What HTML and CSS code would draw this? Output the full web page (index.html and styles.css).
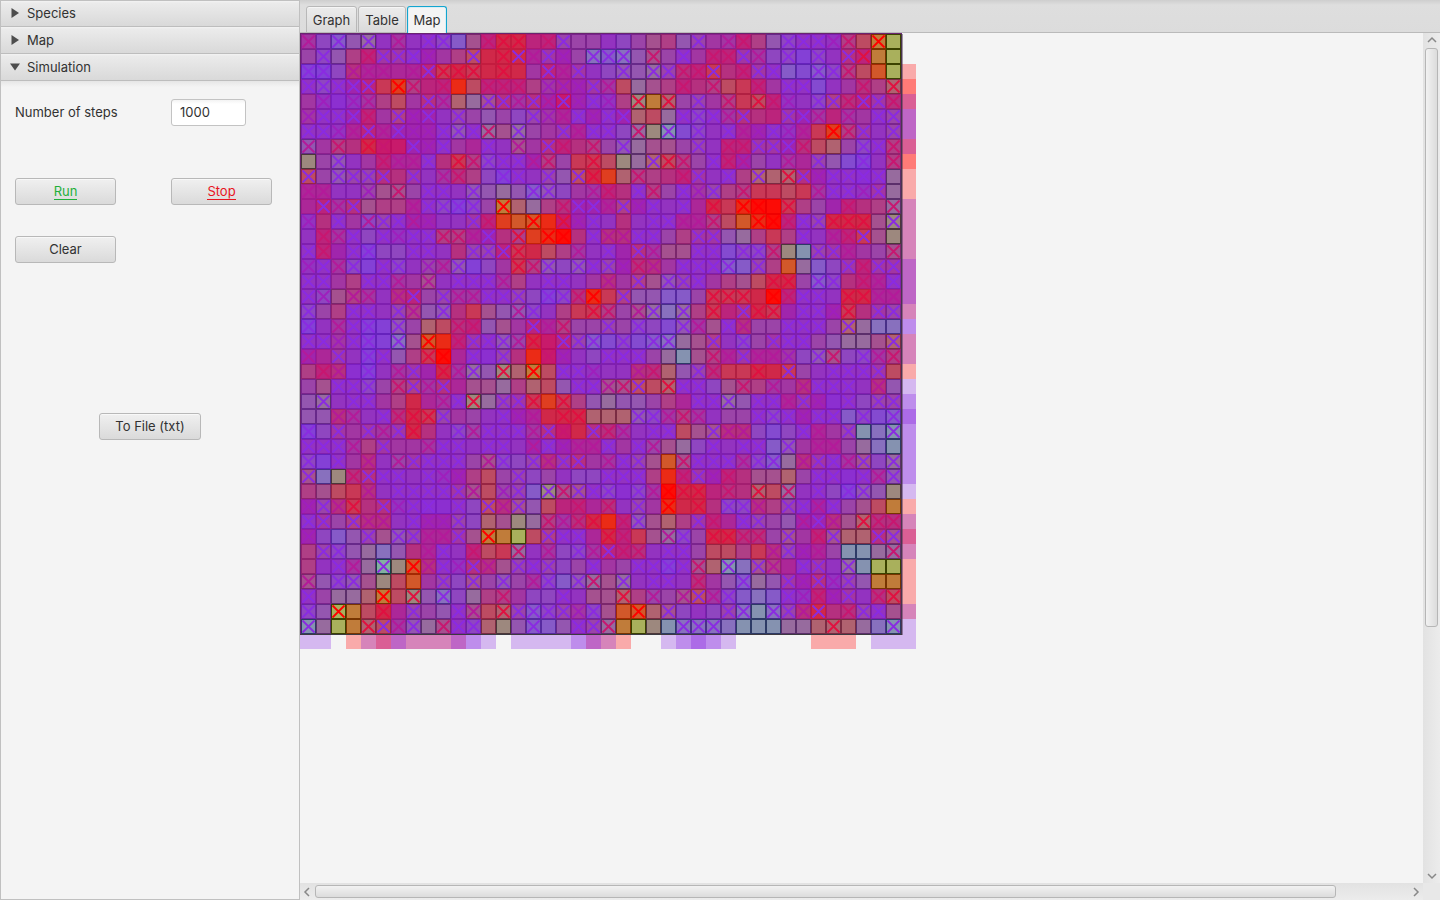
FILE: index.html
```html
<!DOCTYPE html>
<html lang="en">
<head>
<meta charset="utf-8">
<title>Simulation</title>
<link rel="stylesheet" href="styles.css">
</head>
<body>
<div class="app">
  <aside class="sidebar">
    <div class="pane-title"><svg class="arrow" viewBox="0 0 10 12"><path d="M1.500 1L9 6L1.500 11Z"/></svg><span>Species</span></div>
    <div class="pane-title"><svg class="arrow" viewBox="0 0 10 12"><path d="M1.500 1L9 6L1.500 11Z"/></svg><span>Map</span></div>
    <div class="pane-title"><svg class="arrow" viewBox="0 0 10 12"><path d="M0 2.500H10L5 9.500Z"/></svg><span>Simulation</span></div>
    <div class="pane">
      <div class="form">
        <label for="steps">Number of steps</label>
        <input id="steps" class="field" value="1000">
        <button class="btn run"><span>Run</span></button>
        <button class="btn stop"><span>Stop</span></button>
        <button class="btn">Clear</button>
      </div>
      <button class="btn file">To File (txt)</button>
    </div>
  </aside>
  <main class="main">
    <nav class="tabs">
      <div class="tab graph">Graph</div>
      <div class="tab table">Table</div>
      <div class="tab active">Map</div>
    </nav>
    <div class="view">
      <div class="viewport"><svg id="map" class="map" width="617" height="617"></svg></div>
      <div class="vbar">
        <svg class="chev" viewBox="0 0 10 10"><path d="M1 7L5 3L9 7"/></svg>
        <div class="vthumb"></div>
        <svg class="chev end" viewBox="0 0 10 10"><path d="M1 3L5 7L9 3"/></svg>
      </div>
      <div class="hbar">
        <svg class="chev" viewBox="0 0 10 10"><path d="M7 1L3 5L7 9"/></svg>
        <div class="hthumb"></div>
        <svg class="chev end" viewBox="0 0 10 10"><path d="M3 1L7 5L3 9"/></svg>
      </div>
      <div class="corner"></div>
    </div>
  </main>
</div>
<script src="map.js"></script>
</body>
</html>
```
FILE: styles.css
```css
* { box-sizing: border-box; }
body {
  margin: 0;
  font: 13px/16px Inter, "Open Sans", sans-serif;
  color: #323232;
  background: #f4f4f4;
  overflow: hidden;
}
.app { display: flex; width: 1440px; height: 900px; }
.sidebar {
  width: 300px;
  height: 900px;
  display: flex;
  flex-direction: column;
  border: 1px solid #c0c0c0;
}
.pane-title {
  height: 27px;
  flex: none;
  display: flex;
  align-items: center;
  gap: 7px;
  padding: 0 0 1px 9px;
  border-bottom: 1px solid #bdbdbd;
  background: linear-gradient(#f3f3f3 0, #ebebeb 2px, #d9d9d9 100%);
}
.pane-title:first-child { height: 26px; }
.arrow { width: 10px; height: 12px; fill: #4d4d4d; }
.pane {
  flex: 1;
  display: flex;
  flex-direction: column;
  padding: 18px 14px;
  background: linear-gradient(#e6e6e6 0, #f4f4f4 6px);
}
.form {
  display: grid;
  grid-template-columns: 101px 101px;
  grid-template-rows: 27px 48px 27px;
  gap: 31px 55px;
  align-items: start;
}
.form label { padding-top: 5px; white-space: nowrap; }
.field {
  width: 75px;
  height: 27px;
  padding: 0 8px 1px;
  font: inherit;
  color: #323232;
  border: 1px solid #c3c3c3;
  border-radius: 3px;
  background: linear-gradient(#f3f3f3, #fff 4px);
}
.btn {
  height: 27px;
  padding: 0 0 2px;
  font: inherit;
  color: #323232;
  border: 1px solid #b8b8b8;
  border-radius: 3px;
  background: linear-gradient(#f0f0f0, #dadada);
  box-shadow: inset 0 1px #f8f8f8;
}
.run, .stop { margin-top: 21px; }
.run { color: #1fb03a; }
.stop { color: #e8151f; }
.run span, .stop span { border-bottom: 1px solid; }
.file { width: 102px; margin: 150px 0 0 84px; }
.main { flex: 1; display: flex; flex-direction: column; }
.tabs {
  height: 33px;
  display: flex;
  align-items: flex-end;
  gap: 1px;
  padding-left: 6px;
  background: linear-gradient(#cecece, #dedede 5px, #dcdcdc);
  box-shadow: inset 0 -1px #bababa;
}
.tab {
  width: 40px;
  height: 27px;
  padding-top: 5px;
  text-align: center;
  border: 1px solid #b8b8b8;
  border-radius: 3px 3px 0 0;
  background: linear-gradient(#ececec, #dadada);
  box-shadow: inset 0 1px #f6f6f6;
}
.graph { width: 51px; }
.table { width: 48px; }
.tab.active {
  border-color: #13a5cf;
  border-bottom: 0;
  background: #f4f4f4;
  box-shadow: inset 1px 1px #d9eef5, inset -1px 0 #d9eef5;
}
.view {
  flex: 1;
  display: grid;
  grid-template-columns: 1123px 17px;
  grid-template-rows: 850px 17px;
}
.map { display: block; }
.vbar, .hbar { display: flex; align-items: center; background: linear-gradient(90deg, #e2e2e2, #ececec); }
.vbar { flex-direction: column; padding: 2px 0; }
.hbar { background: linear-gradient(#e2e2e2, #ececec); padding: 0 2px; }
.corner { background: #e8e8e8; }
.chev { width: 10px; height: 10px; fill: none; stroke: #888; stroke-width: 1.5; }
.end { margin: auto 0 0; }
.hbar .end { margin: 0 0 0 auto; }
.vthumb, .hthumb { border: 1px solid #b6b6b6; border-radius: 3px; }
.vthumb { width: 13px; height: 579px; margin-top: 3px; background: linear-gradient(90deg, #f2f2f2, #dcdcdc); }
.hthumb { height: 13px; width: 1021px; margin-left: 3px; background: linear-gradient(#f2f2f2, #dcdcdc); }
```
FILE: map.js
```js
// Fill colours of the map cells.
const fills = {
  a: '#8c2fd0', b: '#9333c0', c: '#a025ac', d: '#ac2798', e: '#bb247c', f: '#c81a6b',
  g: '#d02849', h: '#c93856', i: '#eb2b16', j: '#fc0c06', k: '#bd4b62', l: '#b06270',
  m: '#a5518f', n: '#9b44a8', o: '#8f46c0', p: '#8440d6', q: '#865ac8', r: '#9456b0',
  s: '#976b9e', t: '#9d887e', u: '#c07c3a', v: '#a9b05c', w: '#d2582a', x: '#8592b0',
  y: '#8870be', z: '#af3f86', A: '#844ad0', B: '#df3e20', C: '#a236a2', D: '#b5307f',
  G: '#83b0a0'
};
// Stroke colours of the crosses, 0 is a cell without one.
const marks = [null, '#8a2be2', '#9f1fbd', '#b41a9a', '#c81670', '#e01040', '#ff0000'];

const rows = `
C3o0q1r0s1b0C3b0b1o1q0m0e4g5 g5e0e4n1n0n0b0o0n0m0z0r0n1 C0C3e4z0r0o1b1b1b2z4k0u6v0
n0o1r0z0e4C1C1b1c2C0z0k1g0g5 g1d3C1c2n0y1q1y1r0m4n0b1C0 e4e4C1C3o0o1p0o1b0D1e5u0v0
p1p1o0D3d3d3d0d3e1h5g5h5g0g5 g0C0e1d3C1b0o0r1r0s1n1D4e4 h1D0e4C1b1q0A0q1o1z4k0w0v0
b1o1b1c1e1h0B6z4e0e4i0k0e4e4 e4z0C2d2c2C1C3k0s0m0z0e4D0 z4k0h0e4C0b1b1A0b0C0D4z0l5
C0b2a0b2C3z0k0C0D1C3l0s0m1D1 C3D1c3f1c2b1b2z0t5u0l5n0n1 C0z4h0k5e4b2b0o1z1D4e1C1D4
C2b1b1c1e4C0z1c2c1b0n1n0r0n0 o0n1C2d3b1c2b1c1l0k0s0b1o1 b1C3D1D0e0C1c1C3e0C3C0b1n1
b1b1b2d3e1d3c1c2c2b1r1b1s4m0 s1n0C0C1d3b1b1o0s4t0x1A0o1 b0b1d3c2b1b2d3h0B6z4C1b0n1
r3C0z4D0g5f4f0c1c2b1C0d0b1b0 m3C0D1e4D0z4n0r1s0m0m0n0n1 b0e4e4C1C1c1D4k0l0n0o1b1z4
t0n0r1b0C0e4d3d3b1D0h5z4o1b1 b1c3z4n0h0h5k0t0s0l1k5z4n0 b1e4c3n0b0C3d0n1r0A0p1b0z4
k1n0r1n1n1D1D0C1b0C3D4z0o0p1 b1b0n1r0k1g5B0l0z4z0D0e4C1 b0b1z0l1l0l5D1c2b1b1a1b1s0
d3d3b0b0n2m0m4n0b1b1b0r1r0s0 r0q1r1o0C0C3e4D0b1z4n0b1C2 n1z0z4h0h0k0h0C3b1b1b2C1s0
d0e1C3D1m0z0z0d3b1o1p1o1n0u6 l0s0z0D4c1c1d3z1c2b1b0b1d0 g5h0i6j6j0h5z0n0c0e4D0z0s4
b2D0b1C0o3n1b1c3c2b0b0C1e4B0 w0w6i0f5c2b1b0D0b0b1b1d3d3 z4k0w0i6j6e4b1n1g5g5g5m0t1
b0e4C3b1o0b1b2b1b1z4z4d3c1D0 z5B0i6j6D0b1D3D3b1b1n0z0C1 C1r0s0z0h0z0b1b0d3e4h1m0t0
b1e4c0b1p1o0o0b1b1b0D0n1n1e1 h5g0k0z0C3b0b1c0D1C3m0m0b1 b1A0o1o1z4t0x0n1C1d3C0n0m4
b2b1C3o1p0b1o1b0n2C3r1p0o0C0 h5z4r1o0r1b1n1c2D4D3C0b1b1 b1q1q0n1z0w0s0q0o0C1e4C1C1
b1b1C0z0b1b1C3C0m3b0b1b1b1C3 z0b0b1b1b0C0D3C0z1m0r1n1b1 C0z0m0k0g5g5n0q1o1D0e4d3b1
b1o2m0z3C3b0D3e1n0n1C3C3b1b1 n1o0p1o1D4i6h0z1r0r0q0q0n0 h5h5h5g0j6e4b1b1b0g5g5d3d3
o1n0z0b1b1b0n1z3r0r1D0h0m0r0 r3o1b0z0h0h5z4n0m3s1y0s1z0 h5e0D1g5h5c0b1b1c2h5D0C1n1
p1b0C3b1p1p0r1n0l0k0D4e4r0m0 C0e1d3z4n0n0n1n0o1o0A0r1C3 m0b1D3n0n0b1b1b1n0l1s0y0y0
b1b1C2b1p1p0y1m0w6i0e4C1b1r1 n3g5f0e1n1q1A0o1A0q1y1s0m0 z1b0o1n0C1b1b1n0r0s0s0m0l1
c3d0C1b0p1b1r0z0h5j6d0b1a0n1 D0i0f4c2b0o0b1b1b1n0s0x0m0 z4d3C1d3d3C2o0r1m4o0o1C3z4
z0e4D3a0p1b0C3C1c0g5C3s1r0t5 l0u6k0b1b1b2b0b0D3D4l0r0n1 D4h0h0g5g0h1n0b0b1b1b1C1k0
n0m0b1b1o1n0z4z1C3D1d0m0m0s0 z0l0k0r0b1b1m3m4k1k0l5b1b1 o0m0z4z0C3C0D3b1b1b1b0D3r0
r0s1b0b1b1C0z0g0d0C3b1t5s0n1 C1h5B0h5z0r0s0r0r0n0z0d0b1 b1s1r0b1b1d3C1c2a0b1o0n1n1
r0r0D3C3b0b1D4g5h5n1C0n0b0b1 c2d3g0g5g5l0l0l0r1o1C3z4C3 b0n0n0b1o1b1c2b1b1q0o1A0q1
p1o0C1C0C1C3C1g5D0b0o1n3b1b1 b1C3D1f4g0D1D4C3b0b1b1k0m0 m1D3D3o0A0o0b1d3C0n1x0y0x1
b1b1b1C3z0C1C0C0C3b1b1b0b1b1 b0c3b1c2d3d3b1C0b1n3m0s0o0 b1b0b1b1q0r1C0d3d3n0s0y0x0
o1p0b1C0D3b0n3C1b1b1b1n0m3o1 o0n1D3C1D1C0C3b1n1m0w0m4b1 b1b1C3o1q1s0D3C1b1C3m1o0s1
m1y0t0D4D1b1b1b0b1b2c2z0k0n0 n1o0n0b0o0o0b1b1b1z0i0e4C1 c2e4D0m0m0l0n0b1b1a0b1C3r1
z0m0k0h0D3b0b1b1b1b1C1m3k0n2 n1q0t1m4m1b1o1a0o1C3j6g5g5 e0D4D0l5k0s4b0b1o0p1r1r0t0
c2n1D3h5D0D1b2b1a1a0b1o0k1D3 m1r0k0e0e4d0D4b0n1C0i6g0g5 D0o1o1D3z0n1b1c3b1n0m0k0u0
b1C1n0z1D3D3b0b1c2c2n1o0l0m0 t0s0z4C3D4g5i0e4r1m0l0z0C1 e4d0b1n1n0r0c3c1D3m0l5D4D4
c2o0q0r0n1m0r1n1d3d3C1m0u6u0 v0k0z1b1b1d0g5e4h0m0s3o1n0 g5g5D4D4n0m1C0e4m1l0l0D1m1
z0n1o1r0s0y0r0D0d3b1b0e4k0h0 s4b0C3o0o1C3e1e4D4b0b1b1n0 k0k0z0h0D3n1c2d3n0x0x0s0s4
z0b0b1C3s0G1t0w6D3b1b2D1D3m0 n1b1n1o0n0b1C0n0b1b1p1b1m4 l0x1y0m1z3d0b1C1b0s1x0v0v0
m3r0o1r1m0t0k0w0C0n1o0m1n0r1 n0C3o1q0r1s4m0s1b0b1b1b0D4 C0r0q1s0r0C1c2D1b2n1r0u0u0
b1n0s0s0l0u6k0t5r0y1o0s0z0z4 C0o0o0b1b0m0m0l5z0n3n0m3k1 C3o1q0y0q0b1b2e4c2C1b0D4k5
o1r0v6u0k0g5d0n1n0r0b1m3k0l5 n1q1o1n1C2o1m0w0w6l0m1o0b0 o0n1y1x0y1n1D3g1D0D4n1b1m0
x1s0v0u0l5k1C3r1s0m4b1o1l0t0 r0q1q0r0b1n1s4u0v0t0x0y1y1 y1y0x0x0x0s0s0l0l5l0s0y0x1
`.trim().split('\n').map(r => r.replace(/ /g, ''));

// Spill-over tints past the right and bottom edges.
const tints = {
  P: '#f9aaaa', R: '#ff7b77', D: '#da5f95', U: '#be66c6', M: '#d684ba',
  V: '#d5b8f0', W: '#be8dec', X: '#ac6be7'
};
const right = '..PRDUUDRPPMMMMUUUMWMMPVWXWWWWVPMDMPPPMVV';
const bottom = 'VV.PMDUMMMUWV.VVVVWUMP..VWXWV.....PPP.VVV';

// Grid line colour of a cell: darker the less the cell is covered.
const dim = hex => {
  const c = [1, 3, 5].map(i => parseInt(hex.substr(i, 2), 16));
  const t = 0.1 + Math.max(0, c[1] - 40) / 175;
  return `rgb(${c.map((v, i) => Math.max(0, Math.round(v - t * [125, 125, 105][i]))).join()})`;
};

let out = '';
const rect = (x, y, w, h, c) => { out += `<rect x="${x}" y="${y}" width="${w}" height="${h}" fill="${c}"/>`; };
[...right].forEach((k, i) => { if (tints[k]) rect(602, 1 + i * 15, 14, 15, tints[k]); });
[...bottom].forEach((k, i) => { if (tints[k]) rect(i ? 1 + i * 15 : 0, 601, i ? 15 : 16, 15, tints[k]); });
rect(0, 0, 602, 602, '#6a2470');
rect(601, 1, 1.5, 601, '#4a3550');
rect(0, 601, 602, 1, '#3c3a40');
rows.forEach((row, r) => {
  for (let c = 0; c < 40; c++) {
    const color = fills[row[c * 2]];
    const mark = marks[+row[c * 2 + 1]];
    const x = 1 + c * 15, y = 1 + r * 15;
    rect(x, y, 15, 15, dim(color));
    rect(x + 1, y + 1, 13, 13, color);
    if (mark) out += `<path d="M${x + 1.5} ${y + 1.5}l12 12m0 -12l-12 12" stroke="${mark}" stroke-width="1.8" fill="none"/>`;
  }
});
document.getElementById('map').innerHTML = out;
```
